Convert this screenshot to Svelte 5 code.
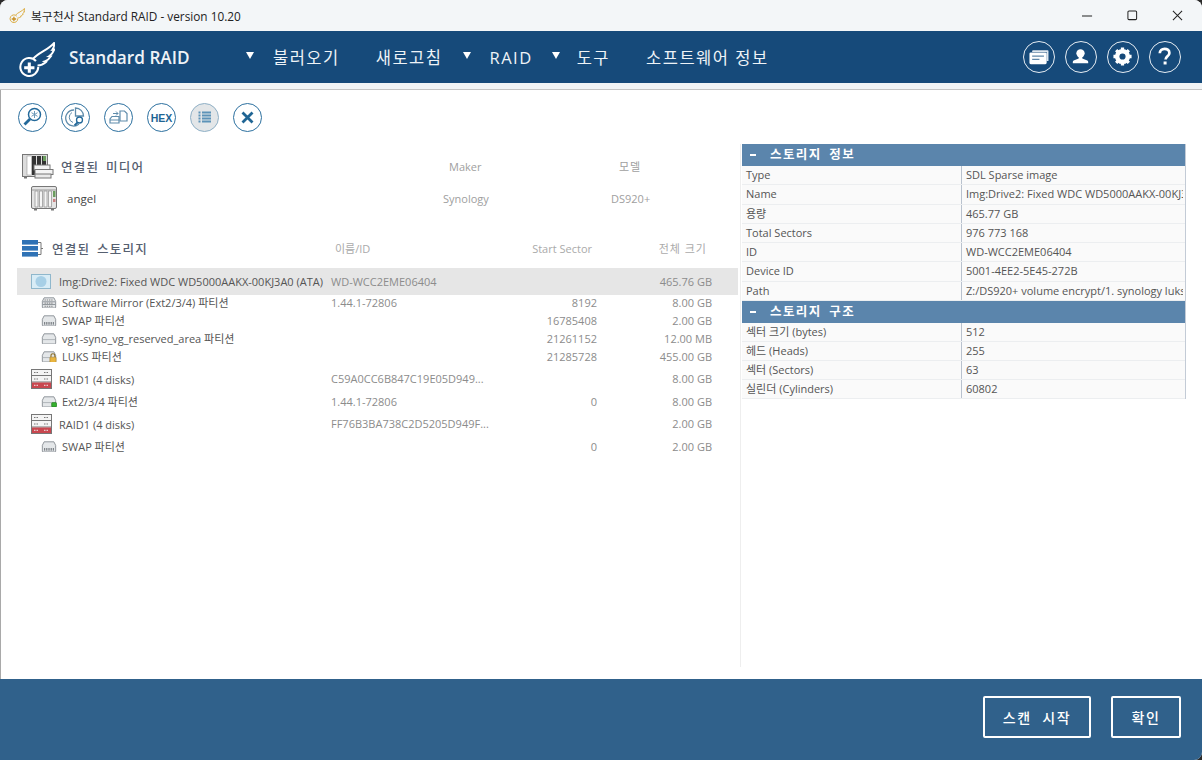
<script lang="ts">
  const media = [{ name: 'angel', maker: 'Synology', model: 'DS920+' }];

  const rows = [
    { kind: 'mirror', name: 'Software Mirror (Ext2/3/4) 파티션', id: '1.44.1-72806', start: '8192', size: '8.00 GB' },
    { kind: 'swap', name: 'SWAP 파티션', id: '', start: '16785408', size: '2.00 GB' },
    { kind: 'plain', name: 'vg1-syno_vg_reserved_area 파티션', id: '', start: '21261152', size: '12.00 MB' },
    { kind: 'luks', name: 'LUKS 파티션', id: '', start: '21285728', size: '455.00 GB' },
    { kind: 'raid', name: 'RAID1 (4 disks)', id: 'C59A0CC6B847C19E05D949...', start: '', size: '8.00 GB' },
    { kind: 'ext', name: 'Ext2/3/4 파티션', id: '1.44.1-72806', start: '0', size: '8.00 GB' },
    { kind: 'raid', name: 'RAID1 (4 disks)', id: 'FF76B3BA738C2D5205D949F...', start: '', size: '2.00 GB' },
    { kind: 'swap', name: 'SWAP 파티션', id: '', start: '0', size: '2.00 GB' }
  ];

  const info = [
    ['Type', 'SDL Sparse image'],
    ['Name', 'Img:Drive2: Fixed WDC WD5000AAKX-00KJ3A0 (ATA)'],
    ['용량', '465.77 GB'],
    ['Total Sectors', '976 773 168'],
    ['ID', 'WD-WCC2EME06404'],
    ['Device ID', '5001-4EE2-5E45-272B'],
    ['Path', 'Z:/DS920+ volume encrypt/1. synology luks/disk.img']
  ];

  const geometry = [
    ['섹터 크기 (bytes)', '512'],
    ['헤드 (Heads)', '255'],
    ['섹터 (Sectors)', '63'],
    ['실린더 (Cylinders)', '60802']
  ];
</script>

{#snippet wing(color, plus)}
  <path d="M15 16C20 10 29 8 35 1c.5 2.500-.3 4.800-1.600 6.600l1.800-.2c-1 3-2.800 5-5 6.400l1.800.1c-1.600 2.700-3.800 4.300-6 5l1.300.5c-2.600 2.400-5.800 3.300-8.300 3.300" fill="none" stroke={color} stroke-width="1.900" />
  <path d="M17.500 18.500A8.700 8.700 0 1 0 19.700 24" fill="none" stroke={color} stroke-width="2" />
  <path d="M11 20v10M6 25h10" stroke={plus} stroke-width="3" />
{/snippet}

{#snippet diskBody()}
  <path d="M1.500 6 3.500 2h11l2 4v6.500a1 1 0 0 1-1 1h-13a1 1 0 0 1-1-1z" fill="#e4e7e9" stroke="#858b90" />
{/snippet}

{#snippet partIcon(kind)}
  {#if kind === 'raid'}
    <svg class="raid-ico" viewBox="0 0 21 20">
      <rect x=".5" y=".5" width="20" height="19" fill="#f4f4f4" stroke="#777" />
      <path d="M1 6.500h19M1 13h19" stroke="#777" />
      <path d="M3 3.500h4M3 10h4M13 3.500h5M13 10h5" stroke="#777" stroke-dasharray="1.500 1" />
      <rect x="1" y="13.500" width="19" height="5.500" fill="#c9474f" />
      <path d="M3 16.300h4M13 16.300h5" stroke="#eee" stroke-dasharray="1.500 1" />
    </svg>
  {:else}
    <svg class="part-ico" viewBox="0 0 18 14">
      {@render diskBody()}
      {#if kind === 'mirror'}
        <path d="M2 6.500h14M2 9.500h14" stroke="#858b90" />
        <path d="M4 4.500h10M4 8h10M4 11.500h10" stroke="#777" stroke-dasharray="1.500 1" />
      {:else if kind === 'swap'}
        <path d="M4 9v3M6 9v3M8 9v3M10 9v3M12 9v3M14 9v3" stroke="#6a7075" />
      {:else if kind === 'plain'}
        <path d="M2 8.500h14" stroke="#aab0b4" />
      {:else if kind === 'luks'}
        <path d="M2 8.500h9" stroke="#aab0b4" />
        <path d="M11.200 8V6.300a2.200 2.200 0 0 1 4.400 0V8" fill="none" stroke="#8a6b22" stroke-width="1.200" />
        <rect x="10" y="8" width="7" height="6" rx=".8" fill="#e9b53f" stroke="#9a7620" stroke-width=".6" />
      {:else if kind === 'ext'}
        <path d="M2 8.500h11" stroke="#aab0b4" />
        <rect x="12" y="8.500" width="5.500" height="5" rx="1" fill="#35b02e" stroke="#1c6f19" stroke-width=".7" />
      {/if}
    </svg>
  {/if}
{/snippet}

<div class="window">
  <div class="titlebar">
    <svg class="title-logo" viewBox="0 0 36 34">{@render wing('#d9a52e', '#c98f1f')}</svg>
    <span class="title-text">복구천사 Standard RAID - version 10.20</span>
    <div class="win-controls">
      <svg viewBox="0 0 12 12"><path d="M0 6.500h11" stroke="#222" stroke-width="1.100" /></svg>
      <svg viewBox="0 0 12 12"><rect x="1" y="1" width="9.500" height="9.500" rx="1.200" fill="none" stroke="#222" stroke-width="1.100" /></svg>
      <svg viewBox="0 0 12 12"><path d="M1 1l10 10M11 1 1 11" stroke="#222" stroke-width="1.100" /></svg>
    </div>
  </div>

  <header class="header">
    <svg class="logo" viewBox="0 0 36 34">{@render wing('#fff', '#fff')}</svg>
    <span class="brand">Standard RAID</span>
    <nav class="nav">
      <span class="arrow"></span><span class="nav-load">불러오기</span>
      <span class="nav-refresh">새로고침</span>
      <span class="arrow"></span><span class="nav-raid">RAID</span>
      <span class="arrow"></span><span class="nav-tools">도구</span>
      <span class="nav-about">소프트웨어 정보</span>
    </nav>
    <div class="head-btns">
      <span class="head-btn">
        <svg viewBox="0 0 32 32">
          <path d="M10 9h16a1 1 0 0 1 1 1v11h-2V11H9v-1a1 1 0 0 1 1-1z" fill="#dfe8f0" />
          <rect x="6" y="11.500" width="19" height="13" rx="1.500" fill="#fff" />
          <path d="M9 15h13v1.400H9zM9 18.500h8v1.400H9z" fill="#5f87a9" />
        </svg>
      </span>
      <span class="head-btn">
        <svg viewBox="0 0 32 32">
          <circle cx="16" cy="12.500" r="4.600" fill="#fff" />
          <path d="M14 16h4v2.200l5.500 2.300c.6.3 1 .9 1 1.600v1.400h-17v-1.400c0-.7.4-1.300 1-1.600l5.500-2.300z" fill="#fff" />
        </svg>
      </span>
      <span class="head-btn">
        <svg viewBox="0 0 32 32">
          <circle cx="16" cy="16" r="6.300" fill="none" stroke="#fff" stroke-width="4.200" />
          <path d="M16 6v20M6 16h20M9 9l14 14M23 9 9 23" stroke="#fff" stroke-width="3.600" />
          <circle cx="16" cy="16" r="3.400" fill="#164a7a" />
        </svg>
      </span>
      <span class="head-btn">
        <svg viewBox="0 0 32 32">
          <path d="M10.800 12.500c0-3.200 2.400-5 5.300-5 3 0 5.300 1.700 5.300 4.500 0 3.800-4.200 3.700-4.200 7.300" fill="none" stroke="#fff" stroke-width="3" />
          <rect x="15" y="21.500" width="3.300" height="3.300" fill="#fff" />
        </svg>
      </span>
    </div>
  </header>
  <div class="strip"></div>

  <div class="toolbar">
    <span class="tool">
      <svg viewBox="0 0 29 29">
        <circle cx="16.500" cy="11.500" r="6" fill="none" stroke="#23699a" stroke-width="1.500" />
        <path d="M16.500 8v7M13.500 9.700l6 3.600M19.500 9.700l-6 3.600" stroke="#6d9ab9" stroke-width="1" />
        <path d="M12 16 6.500 21.500" stroke="#23699a" stroke-width="2.800" />
      </svg>
    </span>
    <span class="tool">
      <svg viewBox="0 0 29 29">
        <path d="M13 7a8 8 0 1 0 5 14" fill="none" stroke="#5f8cab" stroke-width="1.300" />
        <path d="M14.500 5a8 8 0 0 1 8 8h-8z" fill="none" stroke="#5f8cab" stroke-width="1.300" />
        <path d="M11 9.500a5.500 5.500 0 0 0 1 10" fill="none" stroke="#5f8cab" stroke-width="1" />
        <circle cx="18.500" cy="17" r="3" fill="#fff" stroke="#23699a" stroke-width="1.300" />
        <path d="M16.500 19.500l-3 3" stroke="#23699a" stroke-width="1.800" />
      </svg>
    </span>
    <span class="tool">
      <svg viewBox="0 0 29 29">
        <path d="M6 20v-4l2-2.500h7V20z" fill="none" stroke="#5f8cab" stroke-width="1.200" />
        <path d="M6 17h9" stroke="#5f8cab" />
        <path d="M16 18V8h4.500l2.500 2.500V18z" fill="none" stroke="#5f8cab" stroke-width="1.200" />
        <path d="M9 10.500h5M12 8.500l2 2-2 2" fill="none" stroke="#5f8cab" />
      </svg>
    </span>
    <span class="tool hex">HEX</span>
    <span class="tool active">
      <svg viewBox="0 0 29 29">
        <path d="M8.500 9.500h2M8.500 12.500h2M8.500 15.500h2M8.500 18.500h2M12 9.500h9M12 12.500h9M12 15.500h9M12 18.500h9" stroke="#5d93b8" stroke-width="1.800" />
      </svg>
    </span>
    <span class="tool">
      <svg viewBox="0 0 29 29">
        <path d="M9.500 9.500l10 10M19.500 9.500l-10 10" stroke="#1f6594" stroke-width="2.800" />
      </svg>
    </span>
  </div>

  <main class="content">
    <section class="left">
      <div class="media-head">
        <svg class="media-ico" viewBox="0 0 32 25">
          <rect x=".5" y=".5" width="25" height="22" fill="#dcdcdc" stroke="#777" />
          <rect x="5" y="2" width="4.500" height="19" fill="#fff" stroke="#888" stroke-width=".5" />
          <rect x="10" y="2" width="4" height="19" fill="#333" />
          <rect x="15" y="2" width="4" height="11" fill="#333" />
          <rect x="20" y="2" width="4" height="9" fill="#333" />
          <rect x="21" y="2" width="3" height="5" fill="#6b9d5e" />
          <rect x="12" y="11" width="16" height="5" fill="#f4f4f4" stroke="#777" />
          <rect x="13" y="15.500" width="18" height="5" fill="#f4f4f4" stroke="#777" />
          <rect x="13" y="20" width="16" height="4" fill="#e9e9e9" stroke="#777" />
          <path d="M2 23h3v1.500H2z" fill="#777" />
        </svg>
        <span class="head-label">연결된 미디어</span>
        <span class="col-maker">Maker</span>
        <span class="col-model">모델</span>
      </div>
      {#each media as m}
        <div class="media-row">
          <svg class="nas-ico" viewBox="0 0 26 25">
            <rect x=".5" y=".5" width="25" height="22" rx="1.500" fill="#e4e4e4" stroke="#777" />
            <path d="M1 4h24" stroke="#999" />
            <path d="M4 5h3v16H4zM8.500 5h3v16h-3zM13 5h3v16h-3zM17.500 5h3v16h-3z" fill="#f6f6f6" stroke="#999" stroke-width=".8" />
            <rect x="22" y="5" width="2.500" height="6" fill="#6b9d5e" />
            <rect x="22" y="13" width="2.500" height="3" fill="#c98080" />
            <path d="M3 23h3v1.500H3zM20 23h3v1.500h-3z" fill="#777" />
          </svg>
          <span class="media-name">{m.name}</span>
          <span class="col-maker">{m.maker}</span>
          <span class="col-model">{m.model}</span>
        </div>
      {/each}

      <div class="storage-head">
        <svg class="stack-ico" viewBox="0 0 21 17">
          <rect width="16" height="4.600" fill="#2f72b5" />
          <rect y="6" width="16" height="4.600" fill="#2f72b5" />
          <rect y="12" width="16" height="4.600" fill="#2f72b5" />
          <path d="M16 2.500h3v12h-3M19 8.500h2" fill="none" stroke="#777" />
        </svg>
        <span class="head-label">연결된 스토리지</span>
        <span class="col-id">이름/ID</span>
        <span class="col-start">Start Sector</span>
        <span class="col-size">전체 크기</span>
      </div>

      <div class="drive-row">
        <svg class="drive-ico" viewBox="0 0 20 15">
          <rect x=".5" y=".5" width="19" height="14" fill="#d8ecf6" stroke="#8fb7cc" />
          <circle cx="10" cy="7.500" r="5.500" fill="#a7cfe6" />
        </svg>
        <span class="drive-name">Img:Drive2: Fixed WDC WD5000AAKX-00KJ3A0 (ATA)</span>
        <span class="col-id">WD-WCC2EME06404</span>
        <span class="col-start"></span>
        <span class="col-size">465.76 GB</span>
      </div>

      <div class="tree">
        {#each rows as row}
          <div class="tree-row" class:is-raid={row.kind === 'raid'}>
            <span class="tree-ico">{@render partIcon(row.kind)}</span>
            <span class="tree-name">{row.name}</span>
            <span class="col-id">{row.id}</span>
            <span class="col-start">{row.start}</span>
            <span class="col-size">{row.size}</span>
          </div>
        {/each}
      </div>
    </section>

    <aside class="right">
      <div class="panel">
        <div class="panel-head"><span class="dash"></span>스토리지 정보</div>
        {#each info as [k, v]}
          <div class="prop"><span class="prop-key">{k}</span><span class="prop-val">{v}</span></div>
        {/each}
        <div class="panel-head"><span class="dash"></span>스토리지 구조</div>
        {#each geometry as [k, v]}
          <div class="prop short"><span class="prop-key">{k}</span><span class="prop-val">{v}</span></div>
        {/each}
      </div>
    </aside>
  </main>

  <footer class="footer">
    <button class="scan">스캔 시작</button>
    <button class="ok">확인</button>
  </footer>
</div>

<style>
  :global(body) {
    margin: 0;
    background: #2b2b2b;
  }

  .window {
    width: 1202px;
    height: 760px;
    display: flex;
    flex-direction: column;
    background: #fff;
    border-radius: 8px 8px 8px 0;
    overflow: hidden;
    box-shadow: inset 1px 0 0 #a9a9a9;
    font-family: "Open Sans", "Noto Sans CJK KR", sans-serif;
    font-size: 11px;
    color: #555;
  }

  /* Title bar */
  .titlebar {
    height: 31px;
    flex: none;
    display: flex;
    align-items: center;
    padding-left: 9px;
    background: #f3f6f8;
    color: #222;
    font-size: 11.800px;
  }

  .title-logo {
    width: 16px;
    height: 15px;
    margin-right: 6px;
  }

  .win-controls {
    margin-left: auto;
    display: flex;
    gap: 34px;
    padding-right: 19px;
  }

  .win-controls svg {
    width: 11px;
    height: 11px;
  }

  /* Header */
  .header {
    height: 52px;
    flex: none;
    display: flex;
    align-items: center;
    padding-left: 18px;
    background: #164a7a;
    color: #eef3f7;
  }

  .logo {
    width: 37px;
    height: 35px;
    margin-top: 4px;
  }

  .brand {
    margin-left: 14px;
    width: 177px;
    font-size: 17.200px;
    font-weight: 600;
  }

  .nav {
    display: flex;
    align-items: center;
    font-size: 16.500px;
    letter-spacing: 1.500px;
  }

  .arrow {
    width: 0;
    height: 0;
    border-left: 4px solid transparent;
    border-right: 4px solid transparent;
    border-top: 7px solid #fff;
    margin-bottom: 4px;
  }

  .nav-load { margin-left: 19px; }
  .nav-refresh { margin-left: 36px; margin-right: 21px; }
  .nav-raid { margin-left: 18px; margin-right: 19px; }
  .nav-tools { margin-left: 17px; }
  .nav-about { margin-left: 36px; }

  .head-btns {
    margin-left: auto;
    display: flex;
    gap: 10px;
    padding-right: 21px;
  }

  .head-btn {
    width: 32px;
    height: 32px;
    box-sizing: border-box;
    border: 1.500px solid #e6edf3;
    border-radius: 50%;
  }

  .head-btn svg {
    display: block;
    width: 29px;
    height: 29px;
  }

  .strip {
    height: 7px;
    flex: none;
    box-sizing: border-box;
    background: #f1f4f6;
    border-bottom: 1px solid #c4c4c4;
  }

  /* Toolbar */
  .toolbar {
    flex: none;
    display: flex;
    gap: 14px;
    padding: 13px 0 0 18px;
  }

  .tool {
    width: 29px;
    height: 29px;
    box-sizing: border-box;
    border: 1.500px solid #2c709f;
    border-radius: 50%;
    display: flex;
    align-items: center;
    justify-content: center;
    background: #fff;
  }

  .tool svg {
    width: 29px;
    height: 29px;
    flex: none;
  }

  .tool.hex {
    color: #1f6594;
    font-size: 10.500px;
    font-weight: 700;
    font-family: "Liberation Sans", sans-serif;
  }

  .tool.active {
    background: #e3e6e8;
    border-color: #8fb0c6;
  }

  /* Content */
  .content {
    flex: 1;
    min-height: 0;
    display: flex;
    padding-top: 12px;
    margin-bottom: 12px;
  }

  .left {
    width: 740px;
    flex: none;
    box-sizing: border-box;
    padding-left: 17px;
  }

  .media-head,
  .media-row,
  .storage-head,
  .drive-row,
  .tree-row {
    display: flex;
    align-items: center;
    white-space: nowrap;
  }

  .media-head {
    height: 24px;
    padding-left: 5px;
    margin-top: 10px;
  }

  .media-ico {
    width: 32px;
    height: 25px;
    flex: none;
  }

  .head-label {
    color: #566070;
    font-size: 12.500px;
    font-weight: 500;
    letter-spacing: 1.300px;
    word-spacing: 2px;
  }

  .media-head .head-label {
    margin-left: 7px;
    width: 388px;
  }

  .col-maker {
    width: 170px;
    color: #a0a0a0;
  }

  .col-model {
    color: #a0a0a0;
    letter-spacing: 1px;
  }

  .media-row .col-model {
    letter-spacing: 0;
  }

  .media-row {
    height: 26px;
    margin-top: 7px;
    padding-left: 14px;
  }

  .nas-ico {
    width: 26px;
    height: 25px;
    flex: none;
  }

  .media-name {
    margin-left: 10px;
    width: 376px;
    color: #444;
    font-size: 11.500px;
  }

  .media-row .col-maker {
    width: 168px;
  }

  .storage-head {
    height: 18px;
    margin-top: 28px;
    padding-left: 5px;
  }

  .stack-ico {
    width: 21px;
    height: 17px;
    flex: none;
  }

  .storage-head .head-label {
    margin-left: 9px;
    width: 283px;
  }

  .col-id {
    width: 175px;
    flex: none;
    color: #8c8c8c;
  }

  .col-start {
    width: 91px;
    flex: none;
    text-align: right;
    color: #8c8c8c;
  }

  .col-size {
    width: 115px;
    flex: none;
    text-align: right;
    color: #8c8c8c;
  }

  .storage-head .col-id,
  .storage-head .col-start,
  .storage-head .col-size {
    color: #aaa;
  }

  .storage-head .col-id {
    width: 170px;
  }

  .storage-head .col-start {
    width: 87px;
  }

  .storage-head .col-size {
    letter-spacing: 1px;
  }

  .drive-row {
    height: 27px;
    margin-top: 11px;
    background: #e6e6e6;
    padding-left: 14px;
    margin-right: 2px;
  }

  .drive-ico {
    width: 20px;
    height: 15px;
    flex: none;
  }

  .drive-name {
    margin-left: 8px;
    width: 272px;
    flex: none;
    color: #555;
  }

  .tree {
    margin-top: -2px;
  }

  .tree-row {
    height: 18px;
    padding-left: 24px;
  }

  .tree-row.is-raid {
    height: 27px;
    padding-left: 14px;
  }

  .tree-ico {
    width: 21px;
    flex: none;
    display: flex;
    align-items: center;
  }

  .tree-row.is-raid .tree-ico {
    width: 28px;
  }

  .part-ico {
    width: 16px;
    height: 12.500px;
  }

  .raid-ico {
    width: 21px;
    height: 20px;
  }

  .tree-name {
    width: 269px;
    flex: none;
  }

  .tree-row.is-raid .tree-name {
    width: 272px;
    padding-top: 1px;
  }

  .right {
    flex: 1;
    min-width: 0;
    border-left: 1px solid #eee;
    padding-left: 1px;
  }

  .panel {
    width: 443px;
    border-right: 1px solid #c3cbd6;
  }

  .panel-head {
    height: 22px;
    box-sizing: border-box;
    padding-bottom: 4px;
    display: flex;
    align-items: center;
    background: #5b85ac;
    color: #fff;
    font-size: 12.500px;
    font-weight: 600;
    letter-spacing: 1.400px;
    word-spacing: 3px;
  }

  .dash {
    width: 6px;
    height: 2px;
    background: #fff;
    margin: 4px 14px 0 8px;
  }

  .prop {
    height: 19.300px;
    display: flex;
    background: #fafafa;
    border-bottom: 1px solid #eceef0;
    box-sizing: border-box;
    white-space: nowrap;
  }

  .prop.short {
    height: 19px;
  }

  .prop-key {
    width: 220px;
    flex: none;
    box-sizing: border-box;
    padding-left: 4px;
    line-height: 18px;
    border-right: 1px solid #b9c2ce;
  }

  .prop-val {
    flex: 1;
    min-width: 0;
    overflow: hidden;
    padding-left: 4px;
    margin-right: 2px;
    line-height: 18px;
  }

  /* Footer */
  .footer {
    height: 81px;
    flex: none;
    display: flex;
    align-items: center;
    justify-content: flex-end;
    gap: 20px;
    padding: 0 21px 6px 0;
    background: #30618b;
    box-sizing: border-box;
  }

  .footer button {
    height: 42px;
    border: 2px solid #fff;
    border-radius: 2px;
    background: transparent;
    color: #fff;
    font-family: inherit;
    font-size: 14px;
    font-weight: 500;
    letter-spacing: 1.700px;
    word-spacing: 5px;
  }

  .scan { width: 108px; }
  .ok { width: 70px; }
</style>
